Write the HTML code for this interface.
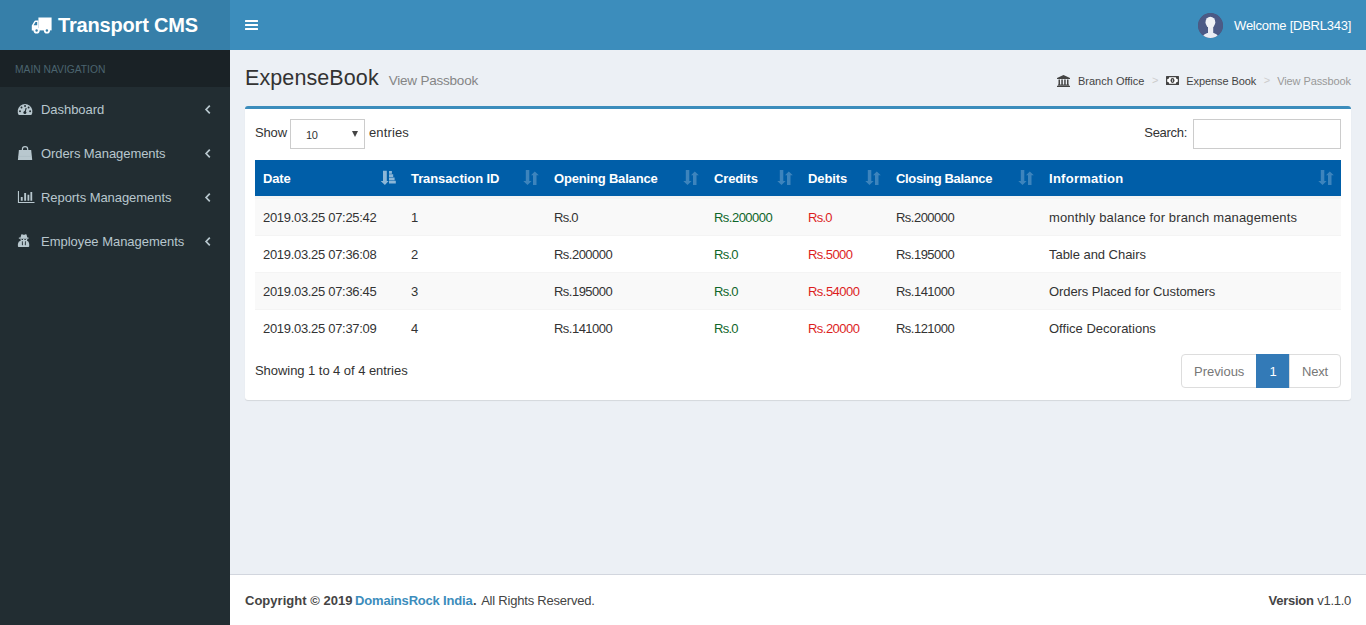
<!DOCTYPE html>
<html lang="en">
<head>
<meta charset="utf-8">
<title>Transport CMS | View Passbook</title>
<style>
*{box-sizing:border-box}
html,body{margin:0;padding:0}
body{font-family:"Liberation Sans",sans-serif;font-size:13px;line-height:20px;color:#333;background:#222d32;overflow:hidden;width:1366px;height:625px;position:relative}
a{text-decoration:none;color:inherit}
ul,ol{list-style:none;margin:0;padding:0}
svg{display:block}
.sx{transform-origin:0 50%}
.t{white-space:pre;display:inline-block;position:relative;top:1px}
/* header */
.main-header{position:absolute;left:0;top:0;width:1366px;height:50px}
.logo{position:absolute;left:0;top:0;width:230px;height:50px;background:#367fa9;color:#fff;font-size:20px;line-height:50px;font-weight:bold;white-space:nowrap}
.logo svg{position:absolute;left:31px;top:17px}
.logo .t{position:absolute;left:58px;top:0}
.navbar{position:absolute;left:230px;top:0;width:1136px;height:50px;background:#3c8dbc;color:#fff}
.toggle{position:absolute;left:15px;top:20px;width:12.6px;height:10px}
.toggle i{display:block;height:2px;background:#fff;margin-bottom:2px;border-radius:.5px}
.user{position:absolute;right:15px;top:15px;height:20px;white-space:nowrap}
.user .avatar{position:absolute;left:-36px;top:-2px;width:25px;height:25px;border-radius:50%;overflow:hidden;background:#4b5578}
/* sidebar */
.main-sidebar{position:absolute;left:0;top:50px;width:230px;height:575px;background:#222d32}
.sidebar-menu .header{background:#1a2226;color:#4b646f;font-size:11.5px;height:37px;line-height:17px;padding:10px 25px 10px 15px}
.sidebar-menu li.treeview{height:44px;color:#b8c7ce;position:relative;white-space:nowrap}
.sidebar-menu li.treeview a{display:block;padding:12px 5px 12px 15px;height:44px}
.sidebar-menu li .ico{position:absolute;left:15px;top:12px;width:20px;height:20px}
.sidebar-menu li.treeview .t{position:absolute;left:41px;top:13px}
.sidebar-menu li .ang{position:absolute;left:204px;top:17px}
/* content */
.content-wrapper{position:absolute;left:230px;top:50px;width:1136px;height:524px;background:#ecf0f5}
.content-header{position:relative;padding:15px 15px 0 15px;height:41px}
.content-header h1{margin:0;font-size:21.5px;font-weight:normal;line-height:26px;white-space:nowrap;color:#333;height:26px}
.content-header h1 .t{top:0}
.content-header h1 small{font-size:13.5px;color:#858585;font-weight:normal;padding-left:4px}
.breadcrumb{position:absolute;right:10px;top:15px;padding:7px 5px;font-size:11px;line-height:17px;white-space:nowrap;color:#444;display:flex;align-items:center}
.breadcrumb li{display:flex;align-items:center}
.breadcrumb li.active{color:#999}
.breadcrumb .sep{color:#ccc;padding:0 7px 0 7.5px}
.breadcrumb .sep.s1{padding-right:8px}
.breadcrumb svg{margin-right:8px}
.dt-top .t{top:-1px}
.content{padding:15px}
.box{position:relative;width:1106px;height:294px;background:#fff;border-top:3px solid #3c8dbc;border-radius:3px;box-shadow:0 1px 1px rgba(0,0,0,.1)}
.box-body{padding:10px;position:relative}
.dt-top{height:35px;position:relative}
.dt-length{position:absolute;left:0;top:0;height:30px;line-height:30px;white-space:nowrap}
.dt-length .select{display:inline-block;vertical-align:top;width:75px;height:30px;border:1px solid #ccc;margin:0 0 0 3px;position:relative;font-size:11px;background:#fff}
.dt-length .select .t{position:absolute;left:15px;top:0;line-height:30px}
.dt-length .select .arr{position:absolute;left:61px;top:11px;width:0;height:0;border-left:3px solid transparent;border-right:3px solid transparent;border-top:6px solid #444}
.dt-filter{position:absolute;right:0;top:0;height:30px;line-height:30px;white-space:nowrap}
.dt-filter .input{display:inline-block;vertical-align:top;width:148px;height:30px;border:1px solid #ccc;margin-left:6px;background:#fff}
table{border-collapse:separate;border-spacing:0;table-layout:fixed;width:1086px;margin:6px 0}
th{background:#005ea8;color:#fff;text-align:left;font-weight:bold;padding:8px;height:38px;border-bottom:2px solid #f4f4f4;position:relative;white-space:nowrap}
th svg{position:absolute;right:7px;top:10px}
td{padding:8px;height:37px;border-top:1px solid #f4f4f4;white-space:nowrap}
tbody tr:nth-child(odd) td{background:#f9f9f9}
.cr{color:#0f662a}
.db{color:#dc1e1e}
.dt-bottom{position:relative;height:38px}
.dt-info{position:absolute;left:0;top:8px}
.pagination{position:absolute;right:0;top:2px;height:34px;display:flex;border-radius:4px}
.pagination li{height:34px;line-height:32px;border:1px solid #ddd;background:#fff;color:#777;margin-left:-1px;padding:0 12px;text-align:center}
.pagination li:first-child{border-radius:4px 0 0 4px;margin-left:0}
.pagination li:last-child{border-radius:0 4px 4px 0}
.pagination li.active{background:#337ab7;border-color:#337ab7;color:#fff}
/* footer */
.main-footer{position:absolute;left:230px;top:574px;width:1136px;height:51px;background:#fff;border-top:1px solid #d2d6de;color:#444;padding:15px;white-space:nowrap}
.main-footer a{color:#3c8dbc}
.main-footer .ver{position:absolute;right:15px;top:15px}
</style>
</head>
<body>
<header class="main-header">
 <a class="logo"><svg width="22" height="18" viewBox="0 0 22 18"><path fill="#fff" d="M7.4 .5h13.2v12.9H7.4z"/><path fill="#fff" d="M.8 13.4V8.6l2.4-4.2q.5-.9 1.5-.9h2.7v9.9z"/><path fill="#367fa9" d="M2.6 8.3l1.9-3.2h1.7v3.2z"/><circle cx="5.6" cy="13.5" r="3.1" fill="#fff"/><circle cx="15.9" cy="13.5" r="3.1" fill="#fff"/><circle cx="5.6" cy="13.5" r="1.2" fill="#367fa9"/><circle cx="15.9" cy="13.5" r="1.2" fill="#367fa9"/></svg><span class="t" style="letter-spacing:-0.17px">Transport CMS</span></a>
 <nav class="navbar">
  <a class="toggle"><i></i><i></i><i></i></a>
  <div class="user"><span class="avatar"><svg width="25" height="25" viewBox="0 0 25 25"><circle cx="12.5" cy="12.5" r="12.5" fill="#4b5a86"/><ellipse cx="12.5" cy="25.5" rx="8.3" ry="6" fill="#e9edf4"/><rect x="10" y="12" width="5.2" height="9" fill="#e9edf4"/><ellipse cx="12.4" cy="9.3" rx="4.9" ry="5.6" fill="#eef1f6"/></svg></span><span class="t" style="letter-spacing:-0.25px">Welcome [DBRL343]</span></div>
 </nav>
</header>
<aside class="main-sidebar">
 <ul class="sidebar-menu">
  <li class="header"><span class="t sx" style="transform:scaleX(0.8935)">MAIN NAVIGATION</span></li>
  <li class="treeview"><a><span class="ico"><svg width="20" height="20" viewBox="0 0 20 20"><path fill="#b8c7ce" d="M3.73 16A7.35 7.35 0 1 1 16.37 16Z"/><g fill="#222d32"><circle cx="5" cy="12.2" r=".95"/><circle cx="6.5" cy="8.5" r=".95"/><circle cx="10.05" cy="7" r=".95"/><circle cx="13.6" cy="8.5" r=".95"/><circle cx="15.1" cy="12.2" r=".95"/><circle cx="9.9" cy="13.4" r="1.5"/></g><path d="M9.9 13.4L11.2 9" stroke="#222d32" stroke-width="1.1"/></svg></span><span class="t" style="letter-spacing:-0.05px">Dashboard</span><span class="ang"><svg width="8" height="11" viewBox="0 0 8 11"><polyline points="5.8,1.7 2.1,5.5 5.8,9.3" fill="none" stroke="#b8c7ce" stroke-width="1.7"/></svg></span></a></li>
  <li class="treeview"><a><span class="ico"><svg width="20" height="20" viewBox="0 0 20 20"><path fill="#b8c7ce" d="M3.9 7.1H16.2L17.2 17H2.9Z"/><path d="M7.4 8.6V6.3a2.65 2.65 0 0 1 5.3 0V8.6" fill="none" stroke="#b8c7ce" stroke-width="1.2"/><path d="M3.2 13.4H16.9" stroke="#a9b9c1" stroke-width=".6"/></svg></span><span class="t" style="letter-spacing:-0.07px">Orders Managements</span><span class="ang"><svg width="8" height="11" viewBox="0 0 8 11"><polyline points="5.8,1.7 2.1,5.5 5.8,9.3" fill="none" stroke="#b8c7ce" stroke-width="1.7"/></svg></span></a></li>
  <li class="treeview"><a><span class="ico"><svg width="20" height="20" viewBox="0 0 20 20"><path fill="#b8c7ce" d="M2.9 4H4V15H19.5V16H2.9Z"/><path fill="#b8c7ce" d="M5.8 10h1.9v3.8H5.8zM9.2 6.1h1.9v7.7H9.2zM12.5 7.8h1.8v6h-1.8zM15.4 4.9h1.8v8.9h-1.8z"/></svg></span><span class="t" style="letter-spacing:-0.06px">Reports Managements</span><span class="ang"><svg width="8" height="11" viewBox="0 0 8 11"><polyline points="5.8,1.7 2.1,5.5 5.8,9.3" fill="none" stroke="#b8c7ce" stroke-width="1.7"/></svg></span></a></li>
  <li class="treeview"><a><span class="ico"><svg width="20" height="20" viewBox="0 0 20 20"><path fill="#b8c7ce" d="M5.500 6.500L6.300 3.600Q6.500 3 7.100 3.200L8.300 3.700Q8.900 3.900 9.500 3.700L10.700 3.200Q11.300 3 11.500 3.600L12.300 6.500H13.200Q13.700 6.500 13.700 7.100T13.200 7.700H4.200Q3.700 7.700 3.700 7.100T4.200 6.500Z"/><path fill="#b8c7ce" d="M5.400 7.700H12.400Q12.400 9 11.900 9.500Q14 10.400 14.200 13V15.200Q14.200 16 13.400 16H3.700Q2.900 16 2.900 15.200V13Q3.100 10.400 5.900 9.500Q5.400 9 5.400 7.700Z"/><path fill="#222d32" d="M6.600 8.100h1.400v.8H6.600zM9.400 8.100h1.400v.8H9.400zM6.900 10.200h.8l.2 3.600-.5.700-.5-.7zM10 10.200h.8l0 3.600-.5.700-.5-.7z"/></svg></span><span class="t" style="letter-spacing:-0.03px">Employee Managements</span><span class="ang"><svg width="8" height="11" viewBox="0 0 8 11"><polyline points="5.8,1.7 2.1,5.5 5.8,9.3" fill="none" stroke="#b8c7ce" stroke-width="1.7"/></svg></span></a></li>
 </ul>
</aside>
<div class="content-wrapper">
 <section class="content-header">
  <h1><span class="t" style="letter-spacing:0.1px">ExpenseBook</span> <small><span class="t" style="letter-spacing:-0.22px">View Passbook</span></small></h1>
  <ol class="breadcrumb">
   <li><svg width="13" height="12" viewBox="0 0 13 12"><path fill="#444" d="M0 3L6.500 0 13 3V4H0zM1.500 4.500h1.500v5H1.500zM4.300 4.500h1.500v5H4.300zM7.200 4.500h1.500v5H7.200zM10 4.500h1.500v5H10zM1 9.600h11v1H1zM0 10.800h13V12H0z"/></svg><span class="t" style="letter-spacing:0.0px">Branch Office</span><span class="sep s1">&gt;</span></li>
   <li><svg width="13" height="9" viewBox="0 0 13 9"><rect width="13" height="9" rx=".5" fill="#444"/><path fill="#fff" d="M3.200 1.200h6.600a2 2 0 0 0 2 2v2.600a2 2 0 0 0-2 2H3.200a2 2 0 0 0-2-2V3.200a2 2 0 0 0 2-2z"/><ellipse cx="6.500" cy="4.500" rx="2" ry="2.400" fill="#444"/><path fill="#fff" d="M6.300 3.200h.7v2.600h-.7z"/></svg><span class="t" style="letter-spacing:-0.09px;margin-left:-1px">Expense Book</span><span class="sep">&gt;</span></li>
   <li class="active"><span class="t" style="letter-spacing:-0.09px">View Passbook</span></li>
  </ol>
 </section>
 <section class="content">
  <div class="box">
   <div class="box-body">
    <div class="dt-top">
     <div class="dt-length"><span class="t" style="letter-spacing:-0.16px">Show</span><span class="select"><span class="t" style="letter-spacing:-0.33px">10</span><span class="arr"></span></span><span class="t" style="letter-spacing:0.15px;margin-left:4px">entries</span></div>
     <div class="dt-filter"><span class="t" style="letter-spacing:-0.3px">Search:</span><span class="input"></span></div>
    </div>
    <table>
     <colgroup><col style="width:148px"><col style="width:143px"><col style="width:160px"><col style="width:94px"><col style="width:88px"><col style="width:153px"><col style="width:300px"></colgroup>
     <thead><tr>
      <th><span class="t" style="letter-spacing:-0.17px">Date</span><svg width="16" height="16" viewBox="0 0 16 16" opacity=".55"><path fill="#fff" d="M3 .7h3.800v10.300h1.800L4.900 15 .7 11H3zM9 1h2.900v2.700H9zM9 4.200h4.200v2.700H9zM9 7.400h5.600v2.800H9zM9 10.700h6.800v2.900H9z"/></svg></th>
      <th><span class="t" style="letter-spacing:-0.09px">Transaction ID</span><svg width="16" height="16" viewBox="0 0 16 16" opacity=".24"><path fill="#fff" d="M2.800 0h3.500v11h2.300L4.500 15 .3 11h2.500zM10 15h3.500V5.200h2.300L11.800 1.400 8 5.200h2z"/></svg></th>
      <th><span class="t" style="letter-spacing:-0.18px">Opening Balance</span><svg width="16" height="16" viewBox="0 0 16 16" opacity=".24"><path fill="#fff" d="M2.800 0h3.500v11h2.300L4.500 15 .3 11h2.500zM10 15h3.500V5.200h2.300L11.800 1.400 8 5.200h2z"/></svg></th>
      <th><span class="t" style="letter-spacing:-0.13px">Credits</span><svg width="16" height="16" viewBox="0 0 16 16" opacity=".24"><path fill="#fff" d="M2.800 0h3.500v11h2.300L4.500 15 .3 11h2.500zM10 15h3.500V5.200h2.300L11.800 1.400 8 5.200h2z"/></svg></th>
      <th><span class="t" style="letter-spacing:-0.12px">Debits</span><svg width="16" height="16" viewBox="0 0 16 16" opacity=".24"><path fill="#fff" d="M2.800 0h3.500v11h2.300L4.500 15 .3 11h2.500zM10 15h3.500V5.200h2.300L11.800 1.400 8 5.200h2z"/></svg></th>
      <th><span class="t" style="letter-spacing:-0.34px">Closing Balance</span><svg width="16" height="16" viewBox="0 0 16 16" opacity=".24"><path fill="#fff" d="M2.800 0h3.500v11h2.300L4.500 15 .3 11h2.500zM10 15h3.500V5.200h2.300L11.800 1.400 8 5.200h2z"/></svg></th>
      <th><span class="t" style="letter-spacing:0.27px">Information</span><svg width="16" height="16" viewBox="0 0 16 16" opacity=".24"><path fill="#fff" d="M2.800 0h3.500v11h2.300L4.500 15 .3 11h2.500zM10 15h3.500V5.200h2.300L11.800 1.400 8 5.200h2z"/></svg></th>
     </tr></thead>
     <tbody>
      <tr><td><span class="t" style="letter-spacing:-0.31px">2019.03.25 07:25:42</span></td><td><span class="t">1</span></td><td><span class="t" style="letter-spacing:-0.71px">Rs.0</span></td><td class="cr"><span class="t" style="letter-spacing:-0.52px">Rs.200000</span></td><td class="db"><span class="t" style="letter-spacing:-0.71px">Rs.0</span></td><td><span class="t" style="letter-spacing:-0.52px">Rs.200000</span></td><td><span class="t" style="letter-spacing:0.14px">monthly balance for branch managements</span></td></tr>
      <tr><td><span class="t" style="letter-spacing:-0.31px">2019.03.25 07:36:08</span></td><td><span class="t">2</span></td><td><span class="t" style="letter-spacing:-0.52px">Rs.200000</span></td><td class="cr"><span class="t" style="letter-spacing:-0.71px">Rs.0</span></td><td class="db"><span class="t" style="letter-spacing:-0.57px">Rs.5000</span></td><td><span class="t" style="letter-spacing:-0.52px">Rs.195000</span></td><td><span class="t" style="letter-spacing:-0.04px">Table and Chairs</span></td></tr>
      <tr><td><span class="t" style="letter-spacing:-0.31px">2019.03.25 07:36:45</span></td><td><span class="t">3</span></td><td><span class="t" style="letter-spacing:-0.52px">Rs.195000</span></td><td class="cr"><span class="t" style="letter-spacing:-0.71px">Rs.0</span></td><td class="db"><span class="t" style="letter-spacing:-0.53px">Rs.54000</span></td><td><span class="t" style="letter-spacing:-0.52px">Rs.141000</span></td><td><span class="t" style="letter-spacing:-0.08px">Orders Placed for Customers</span></td></tr>
      <tr><td><span class="t" style="letter-spacing:-0.31px">2019.03.25 07:37:09</span></td><td><span class="t">4</span></td><td><span class="t" style="letter-spacing:-0.52px">Rs.141000</span></td><td class="cr"><span class="t" style="letter-spacing:-0.71px">Rs.0</span></td><td class="db"><span class="t" style="letter-spacing:-0.53px">Rs.20000</span></td><td><span class="t" style="letter-spacing:-0.52px">Rs.121000</span></td><td><span class="t" style="letter-spacing:0.01px">Office Decorations</span></td></tr>
     </tbody>
    </table>
    <div class="dt-bottom">
     <div class="dt-info"><span class="t" style="letter-spacing:-0.05px">Showing 1 to 4 of 4 entries</span></div>
     <ul class="pagination"><li style="width:76px"><span class="t" style="letter-spacing:-0.03px">Previous</span></li><li class="active" style="width:34px"><span class="t">1</span></li><li style="width:52px"><span class="t" style="letter-spacing:-0.23px">Next</span></li></ul>
    </div>
   </div>
  </div>
 </section>
</div>
<footer class="main-footer">
 <strong><span class="t" style="letter-spacing:0.02px">Copyright © 2019</span> <a style="margin-left:-1px"><span class="t" style="letter-spacing:-0.19px">DomainsRock India</span></a><span class="t" style="margin-left:.6px">.</span></strong> <span class="t" style="letter-spacing:-0.21px;margin-left:.8px">All Rights Reserved.</span>
 <div class="ver"><b><span class="t" style="letter-spacing:-0.27px">Version</span></b> <span class="t" style="letter-spacing:-0.27px">v1.1.0</span></div>
</footer>
</body>
</html>
